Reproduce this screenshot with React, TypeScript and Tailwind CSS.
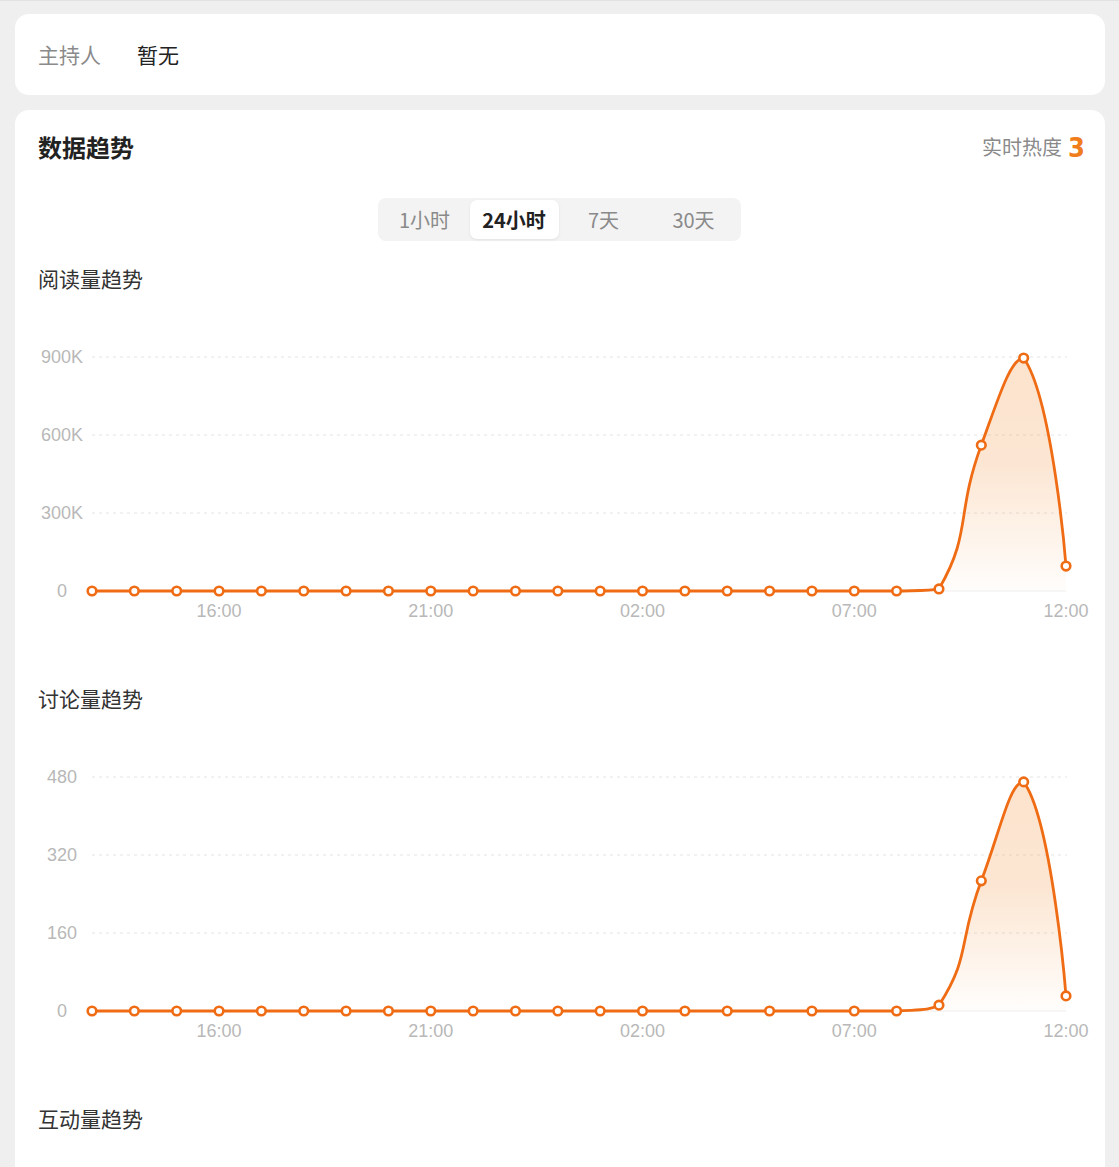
import React, { useState } from 'react';

type Pt = { x: number; y: number };

const FONT = '"Noto Sans CJK SC", "Noto Sans", sans-serif';
const LATIN = '"Liberation Sans", Arial, sans-serif';
const ORANGE = '#ef6c14';

const TABS = ['1小时', '24小时', '7天', '30天'];
const X_LABELS: Record<number, string> = { 3: '16:00', 8: '21:00', 13: '02:00', 18: '07:00', 23: '12:00' };

const zeros = (n: number) => Array.from({ length: n }, () => 0);
const readData = [...zeros(20), 8000, 561000, 896000, 96000];
const talkData = [...zeros(20), 12, 267, 470, 31];

const clamp = (v: number, a: number, b: number) => Math.min(Math.max(v, Math.min(a, b)), Math.max(a, b));

// echarts-like smoothing with control points kept between neighbours
function smoothPath(pts: Pt[], s = 0.5) {
  const cps = pts.map((p, i) => {
    const prev = pts[i - 1];
    const next = pts[i + 1];
    if (!prev || !next) return { inn: p, out: p };
    const vx = next.x - prev.x;
    const vy = next.y - prev.y;
    const d0 = Math.hypot(p.x - prev.x, p.y - prev.y);
    const d1 = Math.hypot(next.x - p.x, next.y - p.y);
    const r = d1 / (d0 + d1 || 1);
    return {
      inn: {
        x: clamp(p.x - vx * s * (1 - r), prev.x, p.x),
        y: clamp(p.y - vy * s * (1 - r), prev.y, p.y)
      },
      out: {
        x: clamp(p.x + vx * s * r, p.x, next.x),
        y: clamp(p.y + vy * s * r, p.y, next.y)
      }
    };
  });
  let d = `M${pts[0].x},${pts[0].y}`;
  for (let i = 1; i < pts.length; i++) {
    const a = cps[i - 1].out;
    const b = cps[i].inn;
    d += ` C${a.x},${a.y} ${b.x},${b.y} ${pts[i].x},${pts[i].y}`;
  }
  return d;
}

function TrendChart({ id, data, max, ticks }: { id: string; data: number[]; max: number; ticks: string[] }) {
  const left = 77;
  const right = 1051;
  const top = 64;
  const base = 298;
  const step = (right - left) / (data.length - 1);
  const pts = data.map((v, i) => ({ x: left + i * step, y: base - (v / max) * (base - top) }));
  const line = smoothPath(pts);
  const area = `${line} L${right},${base} L${left},${base} Z`;
  return (
    <svg width="1090" height="392" viewBox="0 0 1090 392" className="block -mx-[23px]">
      <defs>
        <linearGradient id={id} x1="0" y1="0" x2="0" y2="1">
          <stop offset="0" stopColor="#f4a25a" stopOpacity="0.3" />
          <stop offset="0.45" stopColor="#f4a25a" stopOpacity="0.27" />
          <stop offset="1" stopColor="#f4a25a" stopOpacity="0.02" />
        </linearGradient>
      </defs>
      {ticks.map((t, i) => {
        const y = base - (i * (base - top)) / (ticks.length - 1);
        return (
          <g key={t}>
            {i > 0 &&
            <line x1={left} x2={right + 1} y1={y} y2={y} stroke="#e4e4e4" strokeWidth="1" strokeDasharray="3 4" />
            }
            <text x="47" y={y + 6} textAnchor="middle" fontSize="18" fill="#b8b8b8" style={{ fontFamily: LATIN }}>
              {t}
            </text>
          </g>);

      })}
      <line x1={left} x2={right} y1={base} y2={base} stroke="#eeeeee" strokeWidth="1" />
      <path d={area} fill={`url(#${id})`} />
      <path d={line} fill="none" stroke={ORANGE} strokeWidth="2.8" strokeLinejoin="round" />
      {pts.map((p, i) =>
      <circle key={i} cx={p.x} cy={p.y} r="4.3" fill="#fff" stroke={ORANGE} strokeWidth="2.6" />
      )}
      {Object.entries(X_LABELS).map(([i, l]) =>
      <text key={l} x={left + Number(i) * step} y="324" textAnchor="middle" fontSize="18" fill="#b8b8b8" style={{ fontFamily: LATIN }}>
          {l}
        </text>
      )}
    </svg>);

}

function Section({ title, children }: { title: string; children?: React.ReactNode }) {
  return (
    <div>
      <div className="h-[28px] flex items-center text-[21px] text-[#333]">{title}</div>
      {children}
    </div>);

}

export default function App() {
  const [tab, setTab] = useState(1);
  return (
    <div className="min-h-[1167px] bg-[#efefef] border-t border-[#e2e2e2] pt-[13px] pl-[15px] pr-[14px] overflow-hidden" style={{ fontFamily: FONT }}>
      <div className="bg-white rounded-[14px] h-[81px] px-[23px] flex items-center text-[21px]">
        <span className="text-[#8a8a8a] w-[99px]">主持人</span>
        <span className="text-[#222]">暂无</span>
      </div>

      <div className="mt-[15px] bg-white rounded-t-[14px] px-[23px] pt-[22px] pb-[40px]">
        <div className="flex items-center justify-between h-[30px]">
          <div className="text-[24px] font-bold text-[#222]">数据趋势</div>
          <div className="flex items-center gap-[6px] mr-[-3px]">
            <span className="text-[20px] text-[#8a8a8a]">实时热度</span>
            <span
              className="text-[27px] font-bold text-[#f07c1c] leading-none"
              style={{ fontFamily: '"Liberation Sans Narrow", "DejaVu Sans Condensed", sans-serif' }}>
              3
            </span>
          </div>
        </div>

        <div className="mt-[36px] flex justify-center">
          <div className="ml-[-2px] flex bg-[#f3f3f3] rounded-[8px] p-[2px]">
            {TABS.map((t, i) =>
            <button
              key={t}
              type="button"
              onClick={() => setTab(i)}
              className={
              i === tab ?
              'w-[89px] h-[39px] rounded-[7px] bg-white shadow-[0_1px_3px_rgba(0,0,0,0.08)] text-[20px] font-bold text-[#222]' :
              'w-[90px] h-[39px] rounded-[7px] text-[20px] text-[#8a8a8a]'
              }>
                {t}
              </button>
            )}
          </div>
        </div>

        <div className="mt-[24px]">
          <Section title="阅读量趋势">
            <TrendChart id="g1" data={readData} max={900000} ticks={['0', '300K', '600K', '900K']} />
          </Section>
          <Section title="讨论量趋势">
            <TrendChart id="g2" data={talkData} max={480} ticks={['0', '160', '320', '480']} />
          </Section>
          <Section title="互动量趋势" />
        </div>
      </div>
    </div>);

}
